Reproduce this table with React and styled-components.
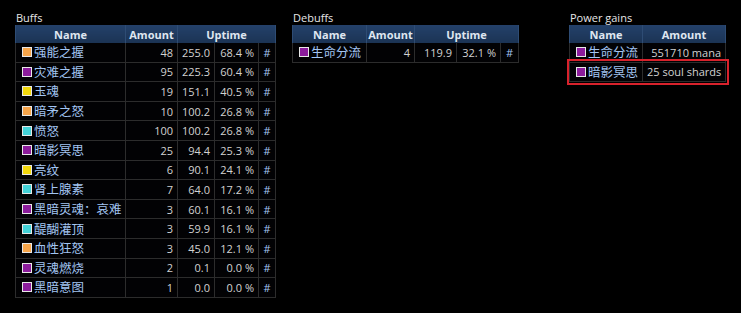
import React from "react";
import styled, { createGlobalStyle } from "styled-components";

const Global = createGlobalStyle`
  html, body { margin: 0; padding: 0; background: #000; }
  body { font-family: "Open Sans", "Noto Sans", "Noto Sans CJK SC", sans-serif; }
`;

const Page = styled.div`
  display: flex;
  align-items: flex-start;
  padding: 11px 0 0 15px;
  background: #000;
  width: 741px;
  height: 313px;
  box-sizing: border-box;
`;

const Section = styled.div`
  margin-left: ${(p) => p.$ml || 0}px;
  display: flex;
  flex-direction: column;
`;

const Title = styled.div`
  color: #e6e6e6;
  font-size: 11px;
  line-height: 14px;
  height: 14px;
  padding-left: 1px;
`;

const Table = styled.table`
  border-collapse: collapse;
  table-layout: fixed;
  width: ${(p) => p.$w}px;
  font-size: 11px;
  border-bottom: 1px solid #3a3a3a;
`;

const Th = styled.th`
  background: linear-gradient(#24416a, #1b3354);
  color: #dfe6f0;
  font-weight: bold;
  font-size: 11px;
  height: 18px;
  padding: 0;
  text-align: center;
  border-left: 1px solid #2e4c74;
  border-right: 1px solid #2e4c74;
`;

const Tr = styled.tr`
  outline: ${(p) => (p.$hl ? "2px solid #d8222c" : "none")};
  outline-offset: 1px;
`;

const Td = styled.td`
  height: 18.6px;
  padding: 0 ${(p) => (p.$name ? 3 : 4)}px 0 ${(p) => (p.$name ? 6 : 4)}px;
  border: 1px solid #2c2c2c;
  border-top: none;
  color: ${(p) => (p.$blue ? "#a3c5f2" : "#d2d2d2")};
  text-align: ${(p) => p.$align || "right"};
  white-space: nowrap;
  overflow: hidden;
  background: #020204;
`;

const NameWrap = styled.span`
  display: inline-flex;
  align-items: center;
  gap: 2px;
  font-family: "Noto Sans CJK SC", sans-serif;
  font-size: 12.5px;
  line-height: 18px;
`;

const Swatch = styled.span`
  display: inline-block;
  width: 8px;
  height: 8px;
  border: 1px solid #e8e8e8;
  background: ${(p) => p.$c};
  flex: none;
`;

const C = {
  orange: "#f7a54a",
  purple: "#8c1c9c",
  yellow: "#f2d80c",
  cyan: "#44d2d8",
};

const buffs = [
  ["强能之握", C.orange, 48, "255.0", "68.4 %"],
  ["灾难之握", C.purple, 95, "225.3", "60.4 %"],
  ["玉魂", C.yellow, 19, "151.1", "40.5 %"],
  ["暗矛之怒", C.orange, 10, "100.2", "26.8 %"],
  ["愤怒", C.cyan, 100, "100.2", "26.8 %"],
  ["暗影冥思", C.purple, 25, "94.4", "25.3 %"],
  ["亮纹", C.yellow, 6, "90.1", "24.1 %"],
  ["肾上腺素", C.cyan, 7, "64.0", "17.2 %"],
  ["黑暗灵魂：哀难", C.purple, 3, "60.1", "16.1 %"],
  ["醍醐灌顶", C.cyan, 3, "59.9", "16.1 %"],
  ["血性狂怒", C.orange, 3, "45.0", "12.1 %"],
  ["灵魂燃烧", C.purple, 2, "0.1", "0.0 %"],
  ["黑暗意图", C.purple, 1, "0.0", "0.0 %"],
];

const debuffs = [["生命分流", C.purple, 4, "119.9", "32.1 %"]];

const power = [
  ["生命分流", C.purple, "551710 mana"],
  ["暗影冥思", C.purple, "25 soul shards", true],
];

function Name({ n, c }) {
  return (
    <NameWrap>
      <Swatch $c={c} />
      {n}
    </NameWrap>
  );
}

function UptimeTable({ rows, widths }) {
  const w = widths.reduce((a, b) => a + b, 0);
  return (
    <Table $w={w}>
      <colgroup>
        {widths.map((x, i) => (
          <col key={i} style={{ width: x }} />
        ))}
      </colgroup>
      <thead>
        <tr>
          <Th>Name</Th>
          <Th>Amount</Th>
          <Th colSpan={3}>Uptime</Th>
        </tr>
      </thead>
      <tbody>
        {rows.map((r) => (
          <Tr key={r[0]}>
            <Td $name $blue $align="left">
              <Name n={r[0]} c={r[1]} />
            </Td>
            <Td>{r[2]}</Td>
            <Td>{r[3]}</Td>
            <Td>{r[4]}</Td>
            <Td $blue $align="center">#</Td>
          </Tr>
        ))}
      </tbody>
    </Table>
  );
}

export default function App() {
  return (
    <>
      <Global />
      <Page>
        <Section>
          <Title>Buffs</Title>
          <UptimeTable rows={buffs} widths={[110, 52, 37, 44, 17]} />
        </Section>
        <Section $ml={16}>
          <Title>Debuffs</Title>
          <UptimeTable rows={debuffs} widths={[74, 48, 42, 44, 18]} />
        </Section>
        <Section $ml={50}>
          <Title>Power gains</Title>
          <Table $w={156}>
            <colgroup>
              <col style={{ width: 73 }} />
              <col style={{ width: 83 }} />
            </colgroup>
            <thead>
              <tr>
                <Th>Name</Th>
                <Th>Amount</Th>
              </tr>
            </thead>
            <tbody>
              {power.map((r) => (
                <Tr key={r[0]} $hl={r[3]}>
                  <Td $name $blue $align="left">
                    <Name n={r[0]} c={r[1]} />
                  </Td>
                  <Td>{r[2]}</Td>
                </Tr>
              ))}
            </tbody>
          </Table>
        </Section>
      </Page>
    </>
  );
}
